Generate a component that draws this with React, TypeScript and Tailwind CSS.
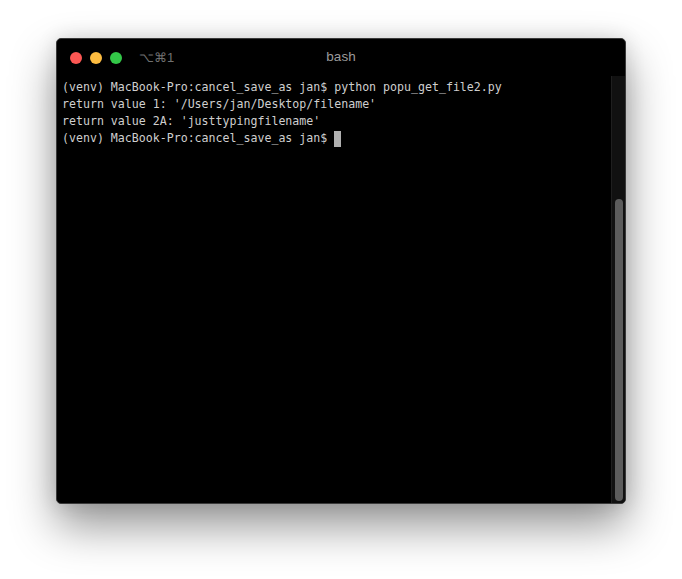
import React from "react";

const lines = [
  "(venv) MacBook-Pro:cancel_save_as jan$ python popu_get_file2.py",
  "return value 1: '/Users/jan/Desktop/filename'",
  "return value 2A: 'justtypingfilename'",
];

const prompt = "(venv) MacBook-Pro:cancel_save_as jan$ ";

const App = () => {
  return (
    <div className="w-[682px] h-[579px] bg-white pl-[56px] pt-[38px] overflow-hidden">
      <div className="w-[570px] h-[466px] bg-black rounded-[5px] flex flex-col overflow-hidden border border-[#3a3a3a] shadow-[0_22px_45px_rgba(0,0,0,0.42),0_0_20px_rgba(0,0,0,0.12)]">
        <div className="h-[37px] flex items-center px-[13px] relative shrink-0">
          <div className="flex items-center gap-[8px]">
            <span className="w-[12px] h-[12px] rounded-full bg-[#fc5753]" />
            <span className="w-[12px] h-[12px] rounded-full bg-[#fdbc40]" />
            <span className="w-[12px] h-[12px] rounded-full bg-[#33c748]" />
          </div>
          <span className="ml-[17px] text-[13px] text-[#707070] font-['Liberation_Sans',sans-serif]">⌥⌘1</span>
          <span className="absolute left-0 right-0 text-center text-[13.5px] text-[#9b9b9b] font-['Liberation_Sans',sans-serif] pointer-events-none">
            bash
          </span>
        </div>
        <div className="flex-1 flex min-h-0">
          <div className="flex-1 pl-[5px] pt-[3px] font-['DejaVu_Sans_Mono',monospace] text-[11.6px] leading-[17px] text-[#cfcfcf] whitespace-pre">
            {lines.map((line, i) => (
              <div key={i}>{line}</div>
            ))}
            <div className="flex items-center">
              <span>{prompt}</span>
              <span className="w-[7px] h-[16px] bg-[#b0b0b0]" />
            </div>
          </div>
          <div className="w-[14px] bg-[#111111] border-l border-[#1f1f1f] flex flex-col justify-end pb-[2px] pl-[3px] pr-[2px]">
            <div className="h-[302px] rounded-full bg-[#5c5c5c]" />
          </div>
        </div>
      </div>
    </div>
  );
};

export default App;
